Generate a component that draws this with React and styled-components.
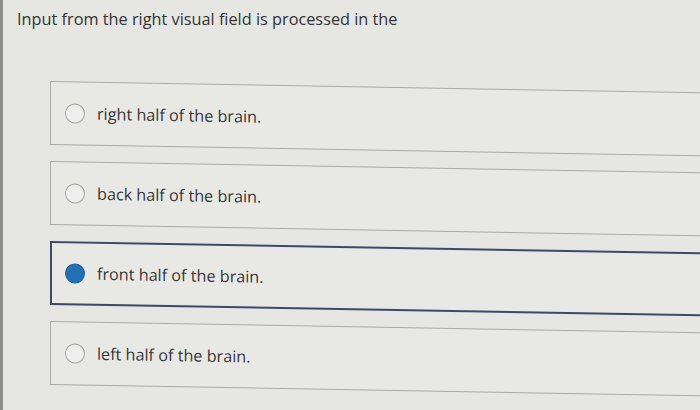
import React from "react";
import styled, { createGlobalStyle } from "styled-components";

const options = [
  { id: "a", label: "right half of the brain." },
  { id: "b", label: "back half of the brain." },
  { id: "c", label: "front half of the brain." },
  { id: "d", label: "left half of the brain." },
];

export default function App() {
  const selected = "c";

  return (
    <>
      <GlobalStyle />
      <Page>
        <Question>Input from the right visual field is processed in the</Question>
        <OptionList>
          {options.map((opt) => (
            <Option key={opt.id} $active={opt.id === selected}>
              <Radio $active={opt.id === selected} />
              <Label>{opt.label}</Label>
            </Option>
          ))}
        </OptionList>
      </Page>
    </>
  );
}

const GlobalStyle = createGlobalStyle`
  html, body {
    margin: 0;
    padding: 0;
    overflow: hidden;
    background: #e6e6e3;
  }
`;

const Page = styled.div`
  width: 700px;
  height: 410px;
  box-sizing: border-box;
  border-left: 3px solid #8d8d8b;
  background: #e6e6e3;
  font-family: "Open Sans", Lato, sans-serif;
  font-variant-ligatures: none;
  color: #363636;
  overflow: hidden;
`;

const Question = styled.div`
  padding: 9px 0 0 14px;
  font-size: 16.3px;
  line-height: 20px;
  color: #333;
`;

const OptionList = styled.div`
  margin: 52px 0 0 47px;
  width: 720px;
  display: flex;
  flex-direction: column;
  gap: 16px;
  transform: skewY(1deg);
  transform-origin: 0 0;
`;

const Option = styled.div`
  height: 64px;
  box-sizing: border-box;
  display: flex;
  align-items: center;
  gap: 12px;
  padding-left: ${(p) => (p.$active ? "13px" : "14px")};
  border: ${(p) => (p.$active ? "2px solid #3d4966" : "1px solid #a9a9a6")};
  background: #e8e8e5;
`;

const Radio = styled.span`
  width: 20px;
  height: 20px;
  box-sizing: border-box;
  border-radius: 50%;
  flex-shrink: 0;
  border: ${(p) => (p.$active ? "1.5px solid #1d5c98" : "1.5px solid #a2a2a0")};
  background: ${(p) => (p.$active ? "#2470b4" : "#eeeeec")};
`;

const Label = styled.span`
  font-size: 16.2px;
  color: #363636;
`;
